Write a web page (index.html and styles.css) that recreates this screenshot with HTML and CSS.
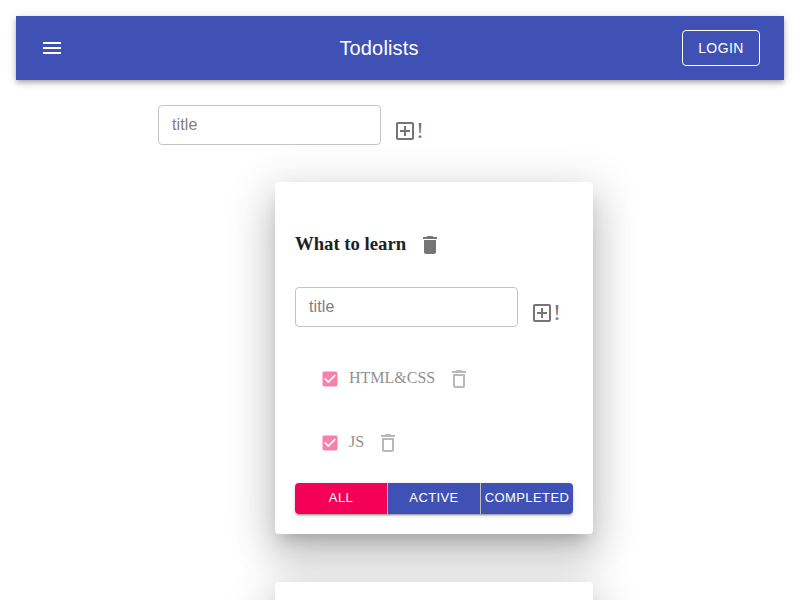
FILE: index.html
```html
<!DOCTYPE html>
<html lang="en">
<head>
<meta charset="utf-8">
<title>Todolists</title>
<link rel="stylesheet" href="styles.css">
</head>
<body>
<header class="appbar">
  <svg class="icon" viewBox="0 0 24 24"><path d="M3 18h18v-2H3v2zm0-5h18v-2H3v2zm0-7v2h18V6H3z"/></svg>
  <h1>Todolists</h1>
  <button class="login">LOGIN</button>
</header>
<main>
  <div class="form form-top">
    <input class="field" placeholder="title">
    <span class="add"><svg class="icon" viewBox="0 0 24 24"><path d="M19 3H5c-1.11 0-2 .9-2 2v14c0 1.1.89 2 2 2h14c1.1 0 2-.9 2-2V5c0-1.1-.9-2-2-2zm0 16H5V5h14v14zm-8-2h2v-4h4v-2h-4V7h-2v4H7v2h4z"/></svg><span>!</span></span>
  </div>
  <section class="card">
    <h3><span>What to learn</span><svg class="icon" viewBox="0 0 24 24"><path d="M6 19c0 1.1.9 2 2 2h8c1.1 0 2-.9 2-2V7H6v12zM19 4h-3.5l-1-1h-5l-1 1H5v2h14V4z"/></svg></h3>
    <div class="form">
      <input class="field" placeholder="title">
      <span class="add"><svg class="icon" viewBox="0 0 24 24"><path d="M19 3H5c-1.11 0-2 .9-2 2v14c0 1.1.89 2 2 2h14c1.1 0 2-.9 2-2V5c0-1.1-.9-2-2-2zm0 16H5V5h14v14zm-8-2h2v-4h4v-2h-4V7h-2v4H7v2h4z"/></svg><span>!</span></span>
    </div>
    <ul class="tasks">
      <li><svg class="check" viewBox="0 0 24 24"><path d="M19 3H5c-1.11 0-2 .9-2 2v14c0 1.1.89 2 2 2h14c1.11 0 2-.9 2-2V5c0-1.1-.89-2-2-2zm-9 14l-5-5 1.41-1.41L10 14.17l7.59-7.59L19 8l-9 9z"/></svg><span>HTML&amp;CSS</span><svg class="icon" viewBox="0 0 24 24"><path d="M6 19c0 1.1.9 2 2 2h8c1.1 0 2-.9 2-2V7H6v12zM8 9h8v10H8V9zm7.5-5l-1-1h-5l-1 1H5v2h14V4z"/></svg></li>
      <li><svg class="check" viewBox="0 0 24 24"><path d="M19 3H5c-1.11 0-2 .9-2 2v14c0 1.1.89 2 2 2h14c1.11 0 2-.9 2-2V5c0-1.1-.89-2-2-2zm-9 14l-5-5 1.41-1.41L10 14.17l7.59-7.59L19 8l-9 9z"/></svg><span>JS</span><svg class="icon" viewBox="0 0 24 24"><path d="M6 19c0 1.1.9 2 2 2h8c1.1 0 2-.9 2-2V7H6v12zM8 9h8v10H8V9zm7.5-5l-1-1h-5l-1 1H5v2h14V4z"/></svg></li>
    </ul>
    <div class="filters">
      <button class="active">ALL</button><button>ACTIVE</button><button>COMPLETED</button>
    </div>
  </section>
  <section class="card"></section>
</main>
</body>
</html>
```
FILE: styles.css
```css
* { box-sizing: border-box; }
html { overflow: hidden; }
body {
  margin: 0;
  padding: 16px;
  height: 600px;
  overflow: hidden;
  background: #fff;
  font-family: "Liberation Sans", Arial, sans-serif;
}
.icon { width: 24px; height: 24px; fill: currentColor; flex: none; }
.appbar {
  display: flex;
  align-items: center;
  justify-content: space-between;
  height: 64px;
  padding: 0 24px;
  color: #fff;
  background: #3f51b5;
  box-shadow: 0 2px 4px -1px rgba(0,0,0,.2), 0 4px 5px rgba(0,0,0,.14), 0 1px 10px rgba(0,0,0,.12);
}
h1 { margin: 0 0 0 12px; font-size: 20px; font-weight: 400; letter-spacing: .15px; }
.login {
  width: 78px;
  height: 36px;
  padding: 0;
  font: 400 14px "Liberation Sans", Arial, sans-serif;
  letter-spacing: .4px;
  color: #fff;
  background: none;
  border: 1px solid #fff;
  border-radius: 4px;
}
.form { display: flex; }
.form-top { margin: 25px 0 0 142px; }
.field {
  width: 223px;
  height: 40px;
  padding: 0 13px;
  font: 16px "Liberation Sans", Arial, sans-serif;
  letter-spacing: .1px;
  border: 1px solid #c4c4c4;
  border-radius: 4px;
}
.field::placeholder { color: #808080; opacity: 1; }
.add {
  display: flex;
  align-items: center;
  height: 24px;
  margin: 14px 0 0 12px;
  font: 24px "Liberation Serif", serif;
  color: #757575;
}
.add span { margin: -2px 0 0 -1px; }
.card {
  width: 318px;
  height: 352px;
  margin: 37px 0 48px 259px;
  padding: 51px 20px 0;
  background: #fff;
  border-radius: 4px;
  box-shadow: 0 11px 15px -7px rgba(0,0,0,.2), 0 24px 38px 3px rgba(0,0,0,.14), 0 9px 46px 8px rgba(0,0,0,.12);
}
.card + .card { margin-top: 0; margin-bottom: 0; }
h3 {
  display: flex;
  align-items: center;
  gap: 12px;
  height: 24px;
  margin: 0 0 30px;
  font: bold 18.72px "Liberation Serif", serif;
  color: #212121;
}
h3 span { margin-top: -3px; }
h3 .icon { color: #757575; }
.tasks {
  margin: 20px 0 8px;
  padding: 0 0 0 25px;
  list-style: none;
  font: 16px "Liberation Serif", serif;
  color: #212121;
}
.tasks li { display: flex; align-items: center; height: 64px; opacity: .5; }
.tasks span { margin: -2px 12px 0 9px; }
.tasks .icon { color: #757575; }
.check { width: 20px; height: 20px; fill: #f50057; }
.filters {
  display: flex;
  height: 31px;
  border-radius: 4px;
  box-shadow: 0 3px 1px -2px rgba(0,0,0,.2), 0 2px 2px rgba(0,0,0,.14), 0 1px 5px rgba(0,0,0,.12);
}
.filters button {
  flex: 1;
  padding: 0 0 2px;
  font: 13px "Liberation Sans", Arial, sans-serif;
  letter-spacing: .4px;
  color: #fff;
  background: #3f51b5;
  border: 0;
  border-right: 1px solid #bdbdbd;
}
.filters button:first-child { border-radius: 4px 0 0 4px; }
.filters button:last-child { border-right: 0; border-radius: 0 4px 4px 0; }
.filters .active { background: #f50057; }
```
